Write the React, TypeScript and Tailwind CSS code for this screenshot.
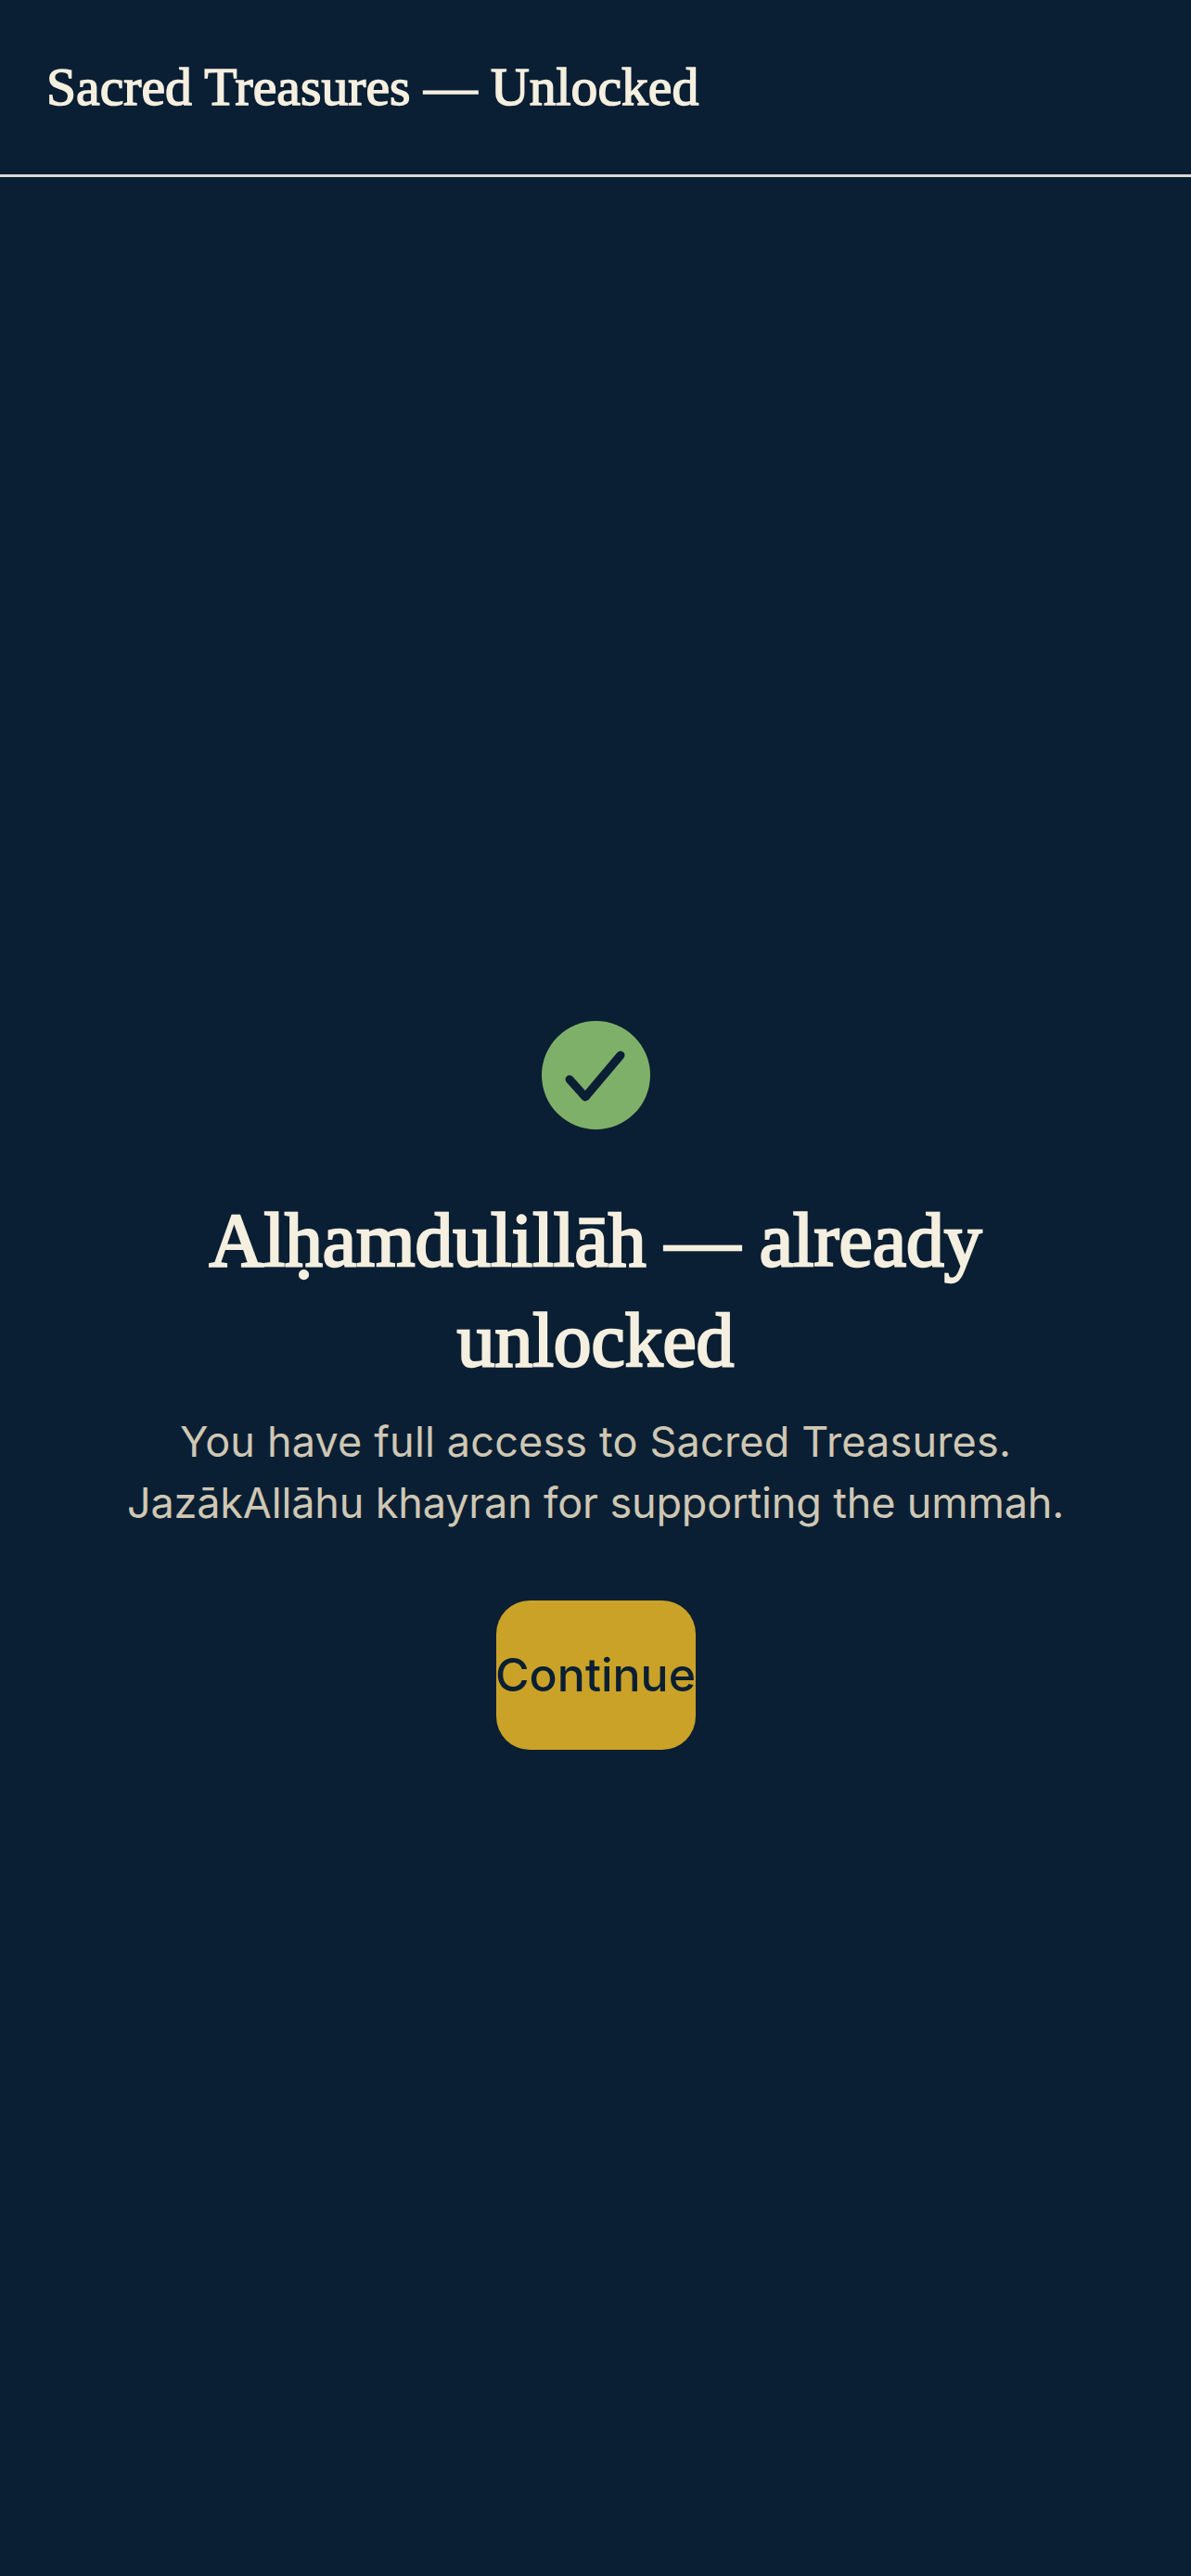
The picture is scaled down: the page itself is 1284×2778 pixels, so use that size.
export default function App() {
  return (
    <div className="flex min-h-[2778px] flex-col bg-[#0a1f33]">
      <header className="flex h-[191px] shrink-0 items-center border-b-[3px] border-[#d9d9d6] px-[50px]">
        <h1 className="font-['Liberation_Serif',serif] text-[57.7px] font-normal leading-none text-[#f5efe0] [-webkit-text-stroke:1.5px_#f5efe0]">
          Sacred Treasures — Unlocked
        </h1>
      </header>
      <main className="flex flex-1 flex-col items-center justify-center px-[72px] pt-[19px]">
        <div className="flex h-[117px] w-[117px] items-center justify-center rounded-full bg-[#7fb069]">
          <svg width="72" height="72" viewBox="0 0 72 72" fill="none">
            <path
              d="M8 40 L25 59 L63 14"
              stroke="#0a1f33"
              strokeWidth="9"
              strokeLinecap="round"
              strokeLinejoin="round"
            />
          </svg>
        </div>
        <h2 className="mt-[66px] text-center font-['Liberation_Serif',serif] text-[81.5px] font-normal leading-[108px] text-[#f5efe0] [-webkit-text-stroke:2.5px_#f5efe0]">
          Alḥamdulillāh — already unlocked
        </h2>
        <p className="mt-[22px] text-center font-['Inter',sans-serif] text-[45px] leading-[66px] text-[#cfc7b4]">
          <span className="block tracking-[0.17px]">You have full access to Sacred Treasures.</span>
          <span className="block tracking-[-0.16px]">JazākAllāhu khayran for supporting the ummah.</span>
        </p>
        <button className="mt-[72px] flex h-[161px] w-[215px] items-center justify-center rounded-[36px] bg-[#c9a227] font-['Inter',sans-serif] text-[50px] font-medium text-[#0a1f33]">
          Continue
        </button>
      </main>
    </div>
  );
}
